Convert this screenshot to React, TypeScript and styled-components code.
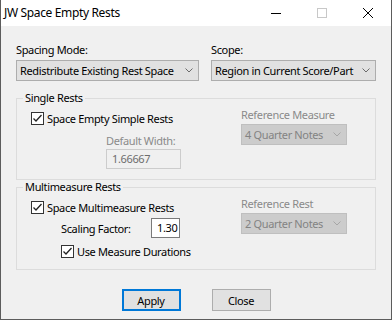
import React from 'react';
import styled, { createGlobalStyle } from 'styled-components';

const GlobalStyle = createGlobalStyle`
  html, body {
    margin: 0;
    padding: 0;
    background: #ffffff;
  }
  body {
    font-family: 'Noto Sans', 'Open Sans', sans-serif;
    font-size: 11px;
    letter-spacing: -0.35px;
    color: #000000;
  }
`;

const Window = styled.div`
  width: 392px;
  height: 320px;
  box-sizing: border-box;
  border: 1px solid #5c5c5c;
  border-top: none;
  display: flex;
  flex-direction: column;
  background: #f0f0f0;
`;

const TitleBar = styled.div`
  height: 26px;
  flex: none;
  display: flex;
  align-items: center;
  background: #ffffff;
`;

const Title = styled.div`
  flex: 1;
  padding-left: 3px;
  font-size: 12px;
  line-height: 16px;
  color: #000000;
`;

const CaptionButton = styled.div`
  width: 46px;
  height: 26px;
  display: flex;
  align-items: center;
  justify-content: center;
`;

const Body = styled.div`
  flex: 1;
  display: flex;
  flex-direction: column;
  padding: 16px 15px 0 15px;
`;

const FieldRow = styled.div`
  display: grid;
  grid-template-columns: 183px 165px;
  column-gap: 12px;
`;

const Field = styled.div`
  display: flex;
  flex-direction: column;
  gap: 3px;
`;

const Label = styled.div<{ $disabled?: boolean }>`
  line-height: 15px;
  white-space: nowrap;
  color: ${(p) => (p.$disabled ? '#8a8a8a' : '#000000')};
`;

const Combo = styled.div<{ $disabled?: boolean; $width?: number }>`
  box-sizing: border-box;
  height: 21px;
  width: ${(p) => (p.$width ? `${p.$width}px` : '100%')};
  display: flex;
  align-items: center;
  justify-content: space-between;
  padding: 0 5px 0 3px;
  border: 1px solid ${(p) => (p.$disabled ? '#bfbfbf' : '#adadad')};
  background: ${(p) => (p.$disabled ? '#cccccc' : '#e1e1e1')};
  color: ${(p) => (p.$disabled ? '#838383' : '#000000')};
  white-space: nowrap;
`;

const Group = styled.fieldset<{ $top: number; $bottom: number }>`
  margin: ${(p) => p.$top}px 0 0 0;
  padding: 2px 0 ${(p) => p.$bottom}px 0;
  border: 1px solid #dcdcdc;
  width: 360px;
  box-sizing: border-box;
  min-width: 0;
  display: grid;
  grid-template-columns: 224px auto;
`;

const Legend = styled.legend`
  padding: 0 2px;
  margin-left: 6px;
  line-height: 14px;
`;

const LeftCol = styled.div`
  display: flex;
  flex-direction: column;
  padding: 4px 0 0 14px;
`;

const RightCol = styled.div`
  display: flex;
  flex-direction: column;
  gap: 2px;
`;

const CheckRow = styled.label<{ $indent?: number; $top?: number }>`
  display: flex;
  align-items: center;
  gap: 3px;
  height: 15px;
  margin: ${(p) => p.$top || 0}px 0 0 ${(p) => p.$indent || 0}px;
  white-space: nowrap;
`;

const Box = styled.span`
  width: 13px;
  height: 13px;
  box-sizing: border-box;
  border: 1px solid #333333;
  background: #ffffff;
  display: flex;
  align-items: center;
  justify-content: center;
  flex: none;
`;

const SubBlock = styled.div`
  margin: 7px 0 0 75px;
  display: flex;
  flex-direction: column;
  gap: 1px;
`;

const TextInput = styled.div<{ $disabled?: boolean; $width: number; $align?: string }>`
  box-sizing: border-box;
  width: ${(p) => p.$width}px;
  height: 20px;
  line-height: 18px;
  padding: 0 2px 0 5px;
  text-align: ${(p) => p.$align || 'left'};
  border: 1px solid ${(p) => (p.$disabled ? '#cccccc' : '#7a7a7a')};
  background: ${(p) => (p.$disabled ? '#f0f0f0' : '#ffffff')};
  color: ${(p) => (p.$disabled ? '#6d6d6d' : '#000000')};
`;

const ScaleRow = styled.div`
  margin: 3px 0 0 30px;
  display: flex;
  align-items: center;
  justify-content: space-between;
  width: 119px;
`;

const ButtonRow = styled.div`
  display: flex;
  justify-content: center;
  gap: 31px;
  margin-top: 19px;
`;

const Button = styled.div<{ $default?: boolean }>`
  box-sizing: border-box;
  width: 59px;
  height: 22px;
  display: flex;
  align-items: center;
  justify-content: center;
  background: #e1e1e1;
  border: ${(p) => (p.$default ? '2px solid #0078d7' : '1px solid #adadad')};
`;

const Chevron = ({ disabled }: { disabled?: boolean }) => (
  <svg width="8" height="5" viewBox="0 0 8 5">
    <polyline points="0.5,0.5 4,4 7.5,0.5" fill="none" stroke={disabled ? '#a6a6a6' : '#6a6a6a'} strokeWidth="1" />
  </svg>
);

const Check = () => (
  <svg width="11" height="11" viewBox="0 0 11 11">
    <polyline points="1.5,5.5 4,8 9.5,2" fill="none" stroke="#222222" strokeWidth="1.3" />
  </svg>
);

const CheckBox = ({ label, indent, top }: { label: string; indent?: number; top?: number }) => (
  <CheckRow $indent={indent} $top={top}>
    <Box>
      <Check />
    </Box>
    {label}
  </CheckRow>
);

export default function App() {
  return (
    <>
      <GlobalStyle />
      <Window>
        <TitleBar>
          <Title>JW Space Empty Rests</Title>
          <CaptionButton>
            <svg width="10" height="10" viewBox="0 0 10 10">
              <line x1="0" y1="5.5" x2="10" y2="5.5" stroke="#000" strokeWidth="1" />
            </svg>
          </CaptionButton>
          <CaptionButton>
            <svg width="10" height="10" viewBox="0 0 10 10">
              <rect x="0.5" y="0.5" width="9" height="9" fill="none" stroke="#c8c8c8" strokeWidth="1" />
            </svg>
          </CaptionButton>
          <CaptionButton>
            <svg width="10" height="10" viewBox="0 0 10 10">
              <path d="M0 0 L10 10 M10 0 L0 10" stroke="#000" strokeWidth="1" />
            </svg>
          </CaptionButton>
        </TitleBar>
        <Body>
          <FieldRow>
            <Field>
              <Label>Spacing Mode:</Label>
              <Combo>
                Redistribute Existing Rest Space
                <Chevron />
              </Combo>
            </Field>
            <Field>
              <Label>Scope:</Label>
              <Combo>
                Region in Current Score/Part
                <Chevron />
              </Combo>
            </Field>
          </FieldRow>

          <Group $top={10} $bottom={10}>
            <Legend>Single Rests</Legend>
            <LeftCol>
              <CheckBox label="Space Empty Simple Rests" />
              <SubBlock>
                <Label $disabled>Default Width:</Label>
                <TextInput $disabled $width={75}>1.66667</TextInput>
              </SubBlock>
            </LeftCol>
            <RightCol>
              <Label $disabled>Reference Measure</Label>
              <Combo $disabled $width={106}>
                4 Quarter Notes
                <Chevron disabled />
              </Combo>
            </RightCol>
          </Group>

          <Group $top={0} $bottom={10}>
            <Legend>Multimeasure Rests</Legend>
            <LeftCol>
              <CheckBox label="Space Multimeasure Rests" />
              <ScaleRow>
                <Label>Scaling Factor:</Label>
                <TextInput $width={29} $align="right">1.30</TextInput>
              </ScaleRow>
              <CheckBox label="Use Measure Durations" indent={30} top={6} />
            </LeftCol>
            <RightCol>
              <Label $disabled>Reference Rest</Label>
              <Combo $disabled $width={106}>
                2 Quarter Notes
                <Chevron disabled />
              </Combo>
            </RightCol>
          </Group>

          <ButtonRow>
            <Button $default>Apply</Button>
            <Button>Close</Button>
          </ButtonRow>
        </Body>
      </Window>
    </>
  );
}
